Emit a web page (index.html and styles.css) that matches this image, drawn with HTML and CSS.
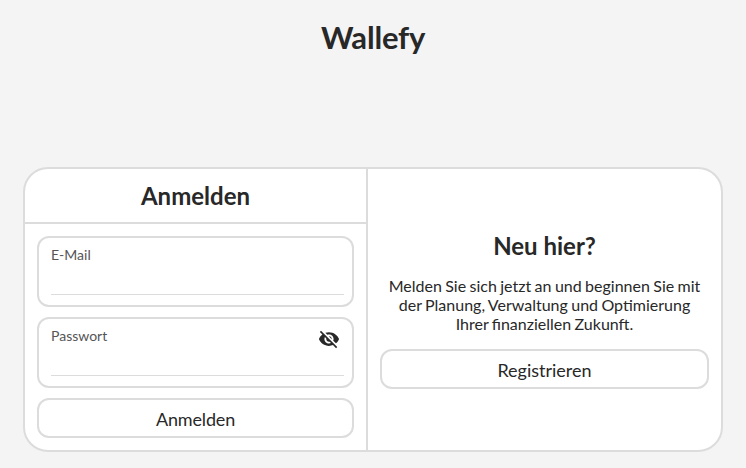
FILE: index.html
```html
<!DOCTYPE html>
<html lang="de">
<head>
<meta charset="utf-8">
<title>Wallefy</title>
<link rel="stylesheet" href="styles.css">
</head>
<body>
<h1 class="brand">Wallefy</h1>
<main class="card">
  <section class="login">
    <h2 class="login-title">Anmelden</h2>
    <form class="form">
      <div class="field">
        <div class="field-head"><label for="email">E-Mail</label></div>
        <input id="email" type="email">
      </div>
      <div class="field">
        <div class="field-head">
          <label for="password">Passwort</label>
          <svg class="eye" viewBox="0 0 24 24" aria-hidden="true"><path d="M12 7c2.76 0 5 2.24 5 5 0 .65-.13 1.26-.36 1.83l2.92 2.92c1.51-1.26 2.7-2.89 3.43-4.75-1.73-4.39-6-7.5-11-7.5-1.4 0-2.74.25-3.98.7l2.16 2.16C10.74 7.13 11.35 7 12 7zM2 4.27l2.28 2.28.46.46C3.08 8.3 1.78 10.02 1 12c1.73 4.39 6 7.5 11 7.5 1.55 0 3.03-.3 4.38-.84l.42.42L19.73 22 21 20.73 3.27 3 2 4.27zM7.53 9.8l1.55 1.55c-.05.21-.08.43-.08.65 0 1.66 1.34 3 3 3 .22 0 .44-.03.65-.08l1.55 1.55c-.67.33-1.41.53-2.2.53-2.76 0-5-2.24-5-5 0-.79.2-1.53.53-2.2zm4.31-.78l3.15 3.15.02-.16c0-1.66-1.34-3-3-3l-.17.01z"/></svg>
        </div>
        <input id="password" type="password">
      </div>
      <button class="button button-login" type="button">Anmelden</button>
    </form>
  </section>
  <section class="signup">
    <h2 class="signup-title">Neu hier?</h2>
    <p class="signup-text">Melden Sie sich jetzt an und beginnen Sie mit der Planung, Verwaltung und Optimierung Ihrer finanziellen Zukunft.</p>
    <button class="button" type="button">Registrieren</button>
  </section>
</main>
</body>
</html>
```
FILE: styles.css
```css
* {
  box-sizing: border-box;
  margin: 0;
}

body {
  height: 468px;
  padding: 18px 23px 0;
  overflow: hidden;
  background: #f4f4f4;
  color: #282828;
  font-family: Lato, sans-serif;
}

.brand {
  height: 38px;
  margin-bottom: 111px;
  font-size: 31px;
  line-height: 38px;
  letter-spacing: -0.2px;
  text-align: center;
}

.card {
  display: grid;
  grid-template-columns: 343px 1fr;
  height: 285px;
  border: 2px solid #dcdcdc;
  border-radius: 25px;
  background: #fff;
}

.login {
  border-right: 2px solid #dcdcdc;
}

.login-title {
  height: 55px;
  border-bottom: 2px solid #dcdcdc;
  font-size: 24px;
  line-height: 54px;
  text-align: center;
}

.form {
  display: flex;
  flex-direction: column;
  gap: 10px;
  padding: 12px;
}

.field {
  height: 71px;
  padding: 8px 8px 0 12px;
  border: 2px solid #dcdcdc;
  border-radius: 12px;
}

.field-head {
  display: flex;
  justify-content: space-between;
  height: 18px;
  color: #555;
  font-size: 14px;
  line-height: 18px;
}

.eye {
  width: 22px;
  height: 22px;
  margin: 1px 4px 0 0;
  fill: #282828;
}

.field input {
  display: block;
  width: 100%;
  height: 31px;
  padding: 0;
  border: 0;
  border-bottom: 1px solid #dcdcdc;
  outline: 0;
  background: transparent;
  font: inherit;
}

.button {
  width: 100%;
  height: 40px;
  padding: 2px 0 0;
  border: 2px solid #dcdcdc;
  border-radius: 12px;
  background: #fff;
  color: #282828;
  font: 18px Lato, sans-serif;
}

.button-login {
  letter-spacing: -0.15px;
}

.signup {
  padding: 61px 12px 0;
  text-align: center;
}

.signup-title {
  margin-bottom: 15px;
  font-size: 24px;
  line-height: 31px;
}

.signup-text {
  margin-bottom: 16px;
  padding: 0 6px;
  font-size: 16px;
  line-height: 19px;
  word-spacing: -0.7px;
}
```
